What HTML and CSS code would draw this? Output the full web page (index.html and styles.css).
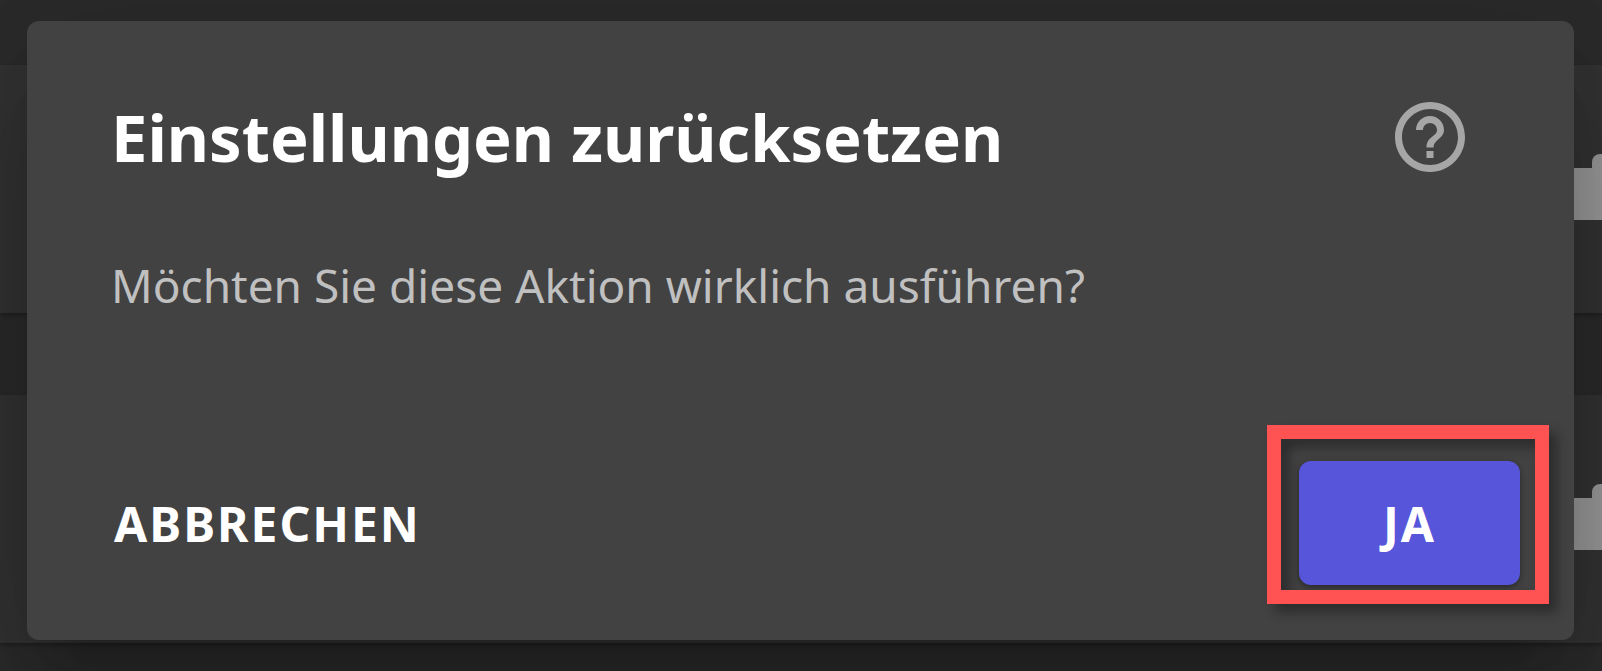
FILE: index.html
```html
<!DOCTYPE html>
<html lang="de">

<head>
  <meta charset="UTF-8">
  <title>Einstellungen zurücksetzen</title>
  <link rel="stylesheet" href="styles.css">
</head>

<body>
  <div class="page">
    <div class="panel">
      <span class="panel-icon"></span>
    </div>
    <div class="panel">
      <span class="panel-icon"></span>
    </div>
  </div>

  <div class="dialog" role="dialog" aria-labelledby="dialogTitle">
    <div class="dialog-header">
      <h1 id="dialogTitle">Einstellungen zurücksetzen</h1>
      <button type="button" class="help" aria-label="Hilfe">
        <svg viewBox="0 0 24 24">
          <path d="M11 18h2v-2h-2v2zm1-16C6.48 2 2 6.48 2 12s4.480 10 10 10 10-4.480 10-10S17.520 2 12 2zm0 18c-4.410 0-8-3.590-8-8s3.590-8 8-8 8 3.590 8 8-3.590 8-8 8zm0-14c-2.210 0-4 1.790-4 4h2c0-1.100.9-2 2-2s2 .9 2 2c0 2-3 1.750-3 5h2c0-2.250 3-2.500 3-5 0-2.210-1.790-4-4-4z" />
        </svg>
      </button>
    </div>
    <p class="dialog-text">Möchten Sie diese Aktion wirklich ausführen?</p>
    <div class="dialog-actions">
      <button type="button" class="btn">Abbrechen</button>
      <div class="highlight">
        <button type="button" class="btn btn-primary">Ja</button>
      </div>
    </div>
  </div>
</body>

</html>
```
FILE: styles.css
```css
* {
  box-sizing: border-box;
}

body {
  margin: 0;
  min-height: 100vh;
  overflow: hidden;
  background-color: #2b2b2b;
  font-family: "Noto Sans", "Open Sans", sans-serif;
}

.page {
  display: flex;
  flex-direction: column;
  gap: 82px;
  padding-top: 65px;
}

.panel {
  display: flex;
  justify-content: flex-end;
  align-items: center;
  height: 248px;
  background-color: #333;
  box-shadow: 0 2px 4px rgba(0, 0, 0, 0.3);
}

/* folder icon, runs out of the window on the right */
.panel-icon {
  position: relative;
  width: 40px;
  height: 52px;
  margin-top: 10px;
  background-color: #999;
}

.panel-icon::before {
  content: "";
  position: absolute;
  right: 0;
  bottom: 100%;
  width: 10px;
  height: 14px;
  border-top-left-radius: 8px;
  background-color: #999;
}

.dialog {
  position: absolute;
  top: 21px;
  left: 27px;
  right: 28px;
  padding: 74px 54px 55px 84px;
  border-radius: 12px;
  background-color: #424242;
  box-shadow: 0 33px 45px -21px rgba(0, 0, 0, 0.2), 0 72px 114px 9px rgba(0, 0, 0, 0.14), 0 27px 138px 24px rgba(0, 0, 0, 0.12);
}

.dialog-header {
  display: flex;
  justify-content: space-between;
  align-items: center;
  padding-right: 48px;
}

h1 {
  margin: 0;
  color: #fff;
  font-size: 65px;
  font-weight: bold;
  line-height: 84px;
}

.help {
  padding: 0;
  border: none;
  background: none;
  cursor: pointer;
}

.help svg {
  display: block;
  width: 84px;
  height: 84px;
  fill: #a6a6a6;
}

.dialog-text {
  margin: 74px 0 144px;
  color: #c0c0c0;
  font-size: 46px;
  line-height: 64px;
}

.dialog-actions {
  display: flex;
  justify-content: space-between;
  align-items: center;
}

.btn {
  height: 124px;
  padding: 0 3px;
  border: none;
  border-radius: 12px;
  background: none;
  color: #fff;
  font-family: inherit;
  font-size: 48px;
  font-weight: bold;
  letter-spacing: 2px;
  text-transform: uppercase;
  cursor: pointer;
}

.btn-primary {
  display: block;
  min-width: 221px;
  background-color: #5755d9;
  box-shadow: 0 2px 6px rgba(0, 0, 0, 0.4);
}

.highlight {
  position: relative;
}

.highlight::after {
  content: "";
  position: absolute;
  top: -36px;
  right: -29px;
  bottom: -19px;
  left: -32px;
  border: 14px solid #ff5252;
  filter: drop-shadow(8px 8px 6px rgba(0, 0, 0, 0.35));
  pointer-events: none;
}
```
